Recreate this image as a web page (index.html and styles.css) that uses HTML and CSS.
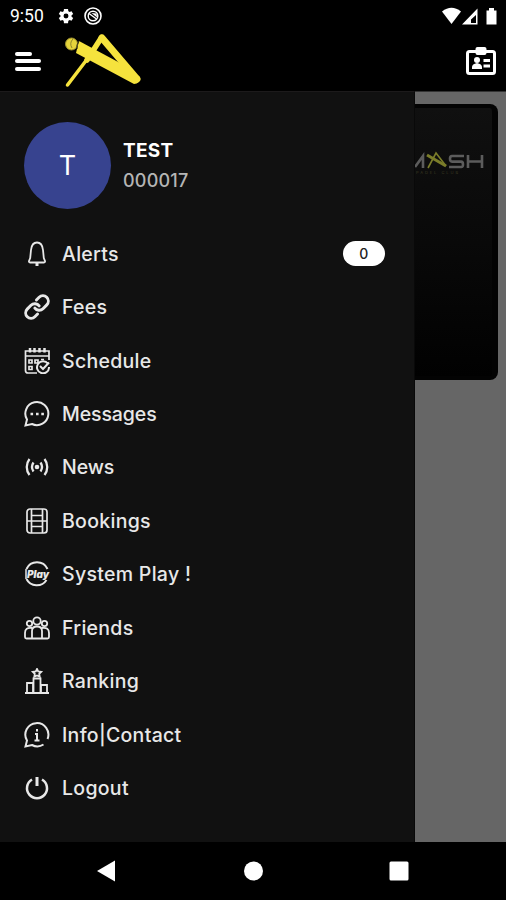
FILE: index.html
```html
<!DOCTYPE html>
<html lang="en">
<head>
    <meta charset="UTF-8">
    <meta name="viewport" content="width=device-width, initial-scale=1.0">
    <title>Menu</title>
    <link rel="stylesheet" href="styles.css">
</head>
<body>
    <div class="status-bar">
        <span class="time">9:50</span>
        <svg class="status-gear" width="18" height="18" viewBox="0 0 24 24"><path fill="#fff" fill-rule="evenodd" d="M19.4 13a7.500 7.500 0 0 0 0-2l2.200-1.700-2.200-3.700-2.600 1.100a7 7 0 0 0-1.700-1L14.700 2.500H9.300l-.4 3.200a7 7 0 0 0-1.700 1L4.600 5.600 2.400 9.300 4.600 11a7.500 7.500 0 0 0 0 2l-2.200 1.700 2.200 3.700 2.600-1.100a7 7 0 0 0 1.700 1l.4 3.200h5.400l.4-3.200a7 7 0 0 0 1.700-1l2.600 1.100 2.200-3.700zM12 15.300a3.300 3.300 0 1 1 0-6.600 3.300 3.300 0 0 1 0 6.600z"/></svg>
        <svg class="status-sync" width="18" height="18" viewBox="0 0 18 18" fill="none" stroke="#fff"><circle cx="9" cy="9" r="8" stroke-width="1.600"/><circle cx="9" cy="9" r="4.800" stroke-width="1.400"/><path stroke-width="1.400" d="M5 6.500l7.500 5.500"/><path fill="#fff" stroke="none" d="M7.500 6l5 .5.500 4z"/></svg>
        <svg class="status-signal" width="56" height="18" viewBox="0 0 56 18" fill="#fff"><path d="M0 4.500Q9.500-3 19 4.500L9.500 17z"/><path fill-rule="evenodd" d="M20 17.500L35.500 1.500v16zM29 12.500V16h5v-8z"/><path d="M44.500 3.500h2.500V1h5v2.500h2.500v14h-10z"/></svg>
    </div>

    <div class="header">
        <div class="menu-button"><span></span><span></span><span></span></div>
        <svg class="logo" width="80" height="58" viewBox="0 0 80 58" fill="none" stroke="#f6e33d">
            <path stroke-width="7" stroke-linecap="round" d="M38 6L73 47"/>
            <path stroke-width="5.500" stroke-linecap="round" d="M37.500 5.500L23 28"/>
            <path stroke-width="3.500" stroke-linecap="round" d="M24 26L3.500 53"/>
            <path stroke="none" fill="#f6e33d" d="M15 9L56 31 76 45Q76 52 70 52L12 21z"/>
            <circle cx="7.500" cy="12" r="6" fill="#e5d43c" stroke="#9e922f"/>
            <path stroke="#2d2b12" stroke-width="1" d="M15 9q-3 4-2 8"/>
            <path stroke="#8e842c" stroke-width="1" d="M9 7q-4 4-1 9"/>
        </svg>
        <svg class="id-card" width="30" height="28" viewBox="0 0 30 28"><rect x="1.500" y="4.500" width="27" height="22" rx="2" fill="none" stroke="#fff" stroke-width="3"/><rect x="9.500" y="0" width="11" height="8" rx="2" fill="#fff"/><circle cx="11" cy="13" r="3" fill="#fff"/><path fill="#fff" d="M6 22v-2q0-3 5-4 5 1 5 4v2zM17.500 12H24v3h-6.500zM17.500 17.500H24v3h-6.500z"/></svg>
    </div>

    <div class="content">
        <div class="drawer">
            <div class="profile">
                <div class="avatar">T</div>
                <div>
                    <div class="name">TEST</div>
                    <div class="number">000017</div>
                </div>
            </div>

            <div class="menu">
                <a class="item">
                    <svg viewBox="0 0 26 26" stroke-width="1.800"><path d="M5 20l1.200-3 .8-8q.8-7.500 6-7.500T19 9l.8 8L21 20q.3 1.500-1 1.500H6Q4.700 21.500 5 20z"/><path d="M13 21.500V25" stroke-width="3"/></svg>
                    <span>Alerts</span><b class="badge">0</b>
                </a>
                <a class="item">
                    <svg viewBox="0 0 24 24" stroke-width="2.700" stroke-linecap="round"><path d="M10 13a5 5 0 0 0 7.540.54l3.500-3.500a5 5 0 0 0-7.070-7.070l-2.500 2.500"/><path d="M14 11a5 5 0 0 0-7.540-.54l-3.500 3.500a5 5 0 0 0 7.070 7.070l2.500-2.500"/></svg>
                    <span>Fees</span>
                </a>
                <a class="item">
                    <svg viewBox="0 0 26 26" stroke-width="1.700"><path d="M13 25H4q-2.500 0-2.500-2.500V3H25v9M1.500 8H25"/><path stroke-width="2.500" d="M6 0v4.500M10.500 0v4.500M15.500 0v4.500M20.500 0v4.500"/><path d="M5 12h3v3H5zM11 12h3v3h-3zM5 18.500h3v3H5zM17 11.500h3"/><path stroke-width="2" d="M24 16a6 6 0 1 0 1 3M16 18l3 3 6-6.500"/></svg>
                    <span>Schedule</span>
                </a>
                <a class="item tight">
                    <svg viewBox="0 0 26 26"><path d="M1.500 24.500l1.500-6a11.500 11.500 0 1 1 5 4.500z"/><path stroke-width="2.600" d="M6.500 13h2.600M12 13h2.600M17.300 13h2.600"/></svg>
                    <span>Messages</span>
                </a>
                <a class="item tight">
                    <svg viewBox="0 0 26 26" stroke-width="2.300"><circle cx="13" cy="13" r="2.300" fill="#e8e8e8" stroke="none"/><path d="M5.500 5a13 13 0 0 0 0 16M9.500 8.500a8 8 0 0 0 0 9M20.500 5a13 13 0 0 1 0 16M16.500 8.500a8 8 0 0 1 0 9"/></svg>
                    <span>News</span>
                </a>
                <a class="item">
                    <svg viewBox="0 0 26 26" stroke-width="1.700"><rect x="3" y="1" width="20" height="24" rx="3"/><path d="M7.500 1v24M18.500 1v24M3 13h20M7.500 7.500h11M7.500 18.500h11"/></svg>
                    <span>Bookings</span>
                </a>
                <a class="item">
                    <svg viewBox="0 0 26 26"><path d="M2.500 8a11.500 11.500 0 0 1 21 0M2.500 18a11.500 11.500 0 0 0 20 1"/><path d="M2 8v10" stroke-width="1.500"/><text class="play-text" x="3" y="16.500" textLength="22">Play</text></svg>
                    <span>System Play !</span>
                </a>
                <a class="item">
                    <svg viewBox="0 0 26 26" stroke-width="1.800"><circle cx="13" cy="6" r="3.700"/><circle cx="5.500" cy="8.500" r="2.700"/><circle cx="20.500" cy="8.500" r="2.700"/><path d="M8 23.500V16q0-4.500 5-4.500t5 4.500v7.500zM8 13Q1 12 1 18v4q0 1.500 1.500 1.500H8M18 13Q25 12 25 18v4q0 1.500-1.500 1.500H18"/></svg>
                    <span>Friends</span>
                </a>
                <a class="item">
                    <svg viewBox="0 0 26 26" stroke-width="1.800"><path d="M1 25h24M3 25V15h6v10M9.500 25V10.500h7V25M17 25v-8h6v8"/><path d="M13 1l1.200 2.500 3 .4-2 2 .5 2.800-2.700-1.300-2.700 1.300.5-2.800-2-2 3-.4z"/></svg>
                    <span>Ranking</span>
                </a>
                <a class="item">
                    <svg viewBox="0 0 26 26"><path d="M19.500 22.500a11.500 11.500 0 0 1-11.500.5L1.500 24.500l1.500-6A11.500 11.500 0 1 1 23.500 17"/><path d="M13 7v2.500M11 12h2v6M10.500 18.500h5"/></svg>
                    <span>Info|Contact</span>
                </a>
                <a class="item">
                    <svg viewBox="0 0 26 26" stroke-width="2.500"><path d="M8 4.500a10 10 0 1 0 10 0"/><path d="M13 2v9" stroke-width="3"/></svg>
                    <span>Logout</span>
                </a>
            </div>
        </div>

        <div class="page">
            <div class="card">
                <svg width="74" height="30" viewBox="0 0 74 30" fill="none" stroke="#5c5c5c" stroke-width="2.600"><path d="M0 16L8 5V17"/><path stroke="#7b7d2a" stroke-width="3" d="M12 4l19 11"/><path stroke="#7b7d2a" stroke-width="1.600" d="M13 17L21 2 31 15"/><path d="M49 5H37q-2 0-2 2.800t2 2.800h9q2 0 2 2.800T46 16H34M53 4v13M67 4v13M53 10.500h14"/><text class="card-note" x="1" y="23" textLength="42">PADEL CLUB</text></svg>
            </div>
        </div>
    </div>

    <div class="nav-bar">
        <svg width="506" height="58" viewBox="0 0 506 58" fill="#fff"><path d="M97 29L115 18.500v21z"/><circle cx="253.500" cy="29" r="9.500"/><rect x="389.500" y="19.500" width="19" height="19" rx="1.500"/></svg>
    </div>
</body>
</html>
```

FILE: styles.css
```css
* {
    box-sizing: border-box;
}

body {
    margin: 0;
    width: 506px;
    height: 900px;
    overflow: hidden;
    background-color: #000;
    color: #e8e8e8;
    font-family: Inter, "Noto Sans", sans-serif;
}

svg {
    display: block;
    flex-shrink: 0;
}

.status-bar {
    display: flex;
    height: 32px;
    padding: 0 8px 1px 10px;
    align-items: center;
}

.time {
    width: 47px;
    color: #fff;
    font-family: Roboto, sans-serif;
    font-size: 17.5px;
}

.status-sync {
    margin-left: 9px;
}

.status-signal {
    margin-left: auto;
}

.header {
    display: flex;
    height: 59px;
    padding: 0 10px 1px 15px;
    align-items: center;
}

.menu-button {
    display: flex;
    flex-direction: column;
    gap: 3.5px;
    width: 26px;
}

.menu-button span {
    height: 4px;
    border-radius: 2px;
    background-color: #fff;
}

.menu-button span:first-child {
    width: 17px;
}

.logo {
    margin-left: 23px;
}

.id-card {
    margin-left: auto;
}

.content {
    display: flex;
    height: 751px;
    background-color: #666;
}

.drawer {
    width: 415px;
    padding: 30px 29px 0 24px;
    background-color: #111;
    border-top: 1px solid #1c1a1b;
    border-right: 1px solid #090909;
}

.profile {
    display: flex;
    align-items: center;
    gap: 12px;
    height: 87px;
}

.avatar {
    width: 87px;
    height: 87px;
    border-radius: 50%;
    background-color: #37438f;
    color: #fff;
    font-size: 27px;
    line-height: 87px;
    text-align: center;
}

.name {
    color: #fff;
    font-size: 19px;
    font-weight: 700;
    line-height: 30px;
    letter-spacing: 0.3px;
}

.number {
    color: #b5b5b5;
    font-size: 18px;
    font-weight: 500;
    line-height: 29px;
    letter-spacing: 0.2px;
}

.menu {
    margin-top: 18px;
}

.item {
    display: flex;
    align-items: center;
    height: 53.45px;
    font-size: 19.5px;
    font-weight: 500;
    letter-spacing: 0.3px;
}

.item.tight {
    letter-spacing: -0.1px;
}

.item svg {
    width: 26px;
    height: 26px;
    margin-right: 12px;
    fill: none;
    stroke: #e8e8e8;
}

.item svg:not([stroke-width]) {
    stroke-width: 2;
}

.play-text {
    fill: #e8e8e8;
    stroke: none;
    font-size: 10px;
    font-style: italic;
    font-weight: 900;
    letter-spacing: 0;
}

.badge {
    width: 42px;
    height: 25px;
    margin-left: auto;
    border-radius: 13px;
    background-color: #fff;
    color: #222;
    font-size: 14px;
    font-weight: 500;
    line-height: 25px;
    text-align: center;
}

.page {
    flex: 1;
    padding-top: 12px;
    border-top: 1px solid #333;
}

.card {
    width: 83px;
    height: 276px;
    padding-top: 43px;
    background: linear-gradient(#101010, #090909 50%, #010101);
    border: solid #030303;
    border-width: 4px 6px 4px 0;
    border-radius: 0 8px 8px 0;
}

.card-note {
    fill: #3b3922;
    stroke: none;
    font-size: 4px;
}

.nav-bar {
    height: 58px;
}
```
